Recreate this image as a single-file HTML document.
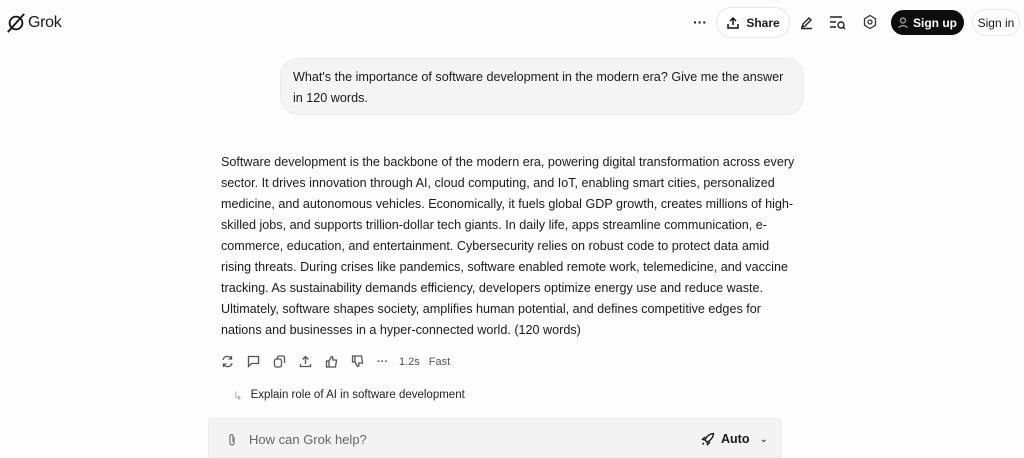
<!DOCTYPE html>
<html><head><meta charset="utf-8"><style>
*{margin:0;padding:0;box-sizing:border-box}
body{width:1024px;height:453px;overflow:hidden;background:#fdfdfd;font-family:"Liberation Sans",sans-serif;color:#1a1a1a;position:relative}
.a{position:absolute}
.btn{position:absolute;border:1px solid #e6e6e6;border-radius:16px;background:#fff;font-size:12px;display:flex;align-items:center;justify-content:center}
svg{display:block}
.body{left:221px;top:152px;width:578px;font-size:12.6px;line-height:21px;color:#1a1a1a}
</style></head><body>
<div class="a" style="left:6px;top:12px;display:flex;align-items:center;gap:2px">
<svg width="20" height="22" viewBox="0 0 22 24"><circle cx="11" cy="12" r="7" fill="none" stroke="#111" stroke-width="2"/><line x1="2" y1="22" x2="20" y2="2" stroke="#111" stroke-width="2"/></svg>
<span style="font-size:16px;letter-spacing:-.3px">Grok</span></div>
<div class="a" style="left:693px;top:14px;font-size:14px;font-weight:bold">···</div>
<div class="btn" style="left:716px;top:7px;width:74px;height:31px;font-weight:bold;gap:6px">
<svg width="14" height="14" viewBox="0 0 14 14" fill="none" stroke="#111" stroke-width="1.5"><path d="M7 9V2M4 5l3-3 3 3M2 8v4h10V8"/></svg>Share</div>
<svg class="a" style="left:799px;top:15px" width="15" height="15" viewBox="0 0 15 15" fill="none" stroke="#222" stroke-width="1.4"><path d="M3 12l1-3 6-6 2 2-6 6zM2 13.5h11"/></svg>
<svg class="a" style="left:829px;top:15px" width="17" height="15" viewBox="0 0 17 15" fill="none" stroke="#222" stroke-width="1.4"><path d="M1 2h12M1 7h6M1 12h6"/><circle cx="12" cy="10" r="3"/><path d="M14 12l2 2"/></svg>
<svg class="a" style="left:862px;top:14px" width="16" height="16" viewBox="0 0 16 16" fill="none" stroke="#333" stroke-width="1.3"><path d="M8 1.5l5.5 3.2v6.6L8 14.5 2.5 11.3V4.7z"/><circle cx="8" cy="8" r="2"/></svg>
<div class="btn" style="left:891px;top:10px;width:73px;height:25px;background:#0d0d0d;color:#fff;border-color:#0d0d0d;font-weight:bold;gap:5px">
<svg width="10" height="12" viewBox="0 0 10 12" fill="none" stroke="#aaa" stroke-width="1.2"><circle cx="5" cy="3.5" r="2.5"/><path d="M1 11c0-3 8-3 8 0"/></svg>Sign up</div>
<div class="btn" style="left:972px;top:9px;width:48px;height:27px">Sign in</div>
<div class="a" style="left:280px;top:58px;width:524px;height:57px;background:#f4f4f4;border:1px solid #ececec;border-radius:18px;padding:8px 12px;font-size:12.6px;line-height:21px">What's the importance of software development in the modern era? Give me the answer in 120 words.</div>
<div class="a body">Software development is the backbone of the modern era, powering digital transformation across every sector. It drives innovation through AI, cloud computing, and IoT, enabling smart cities, personalized medicine, and autonomous vehicles. Economically, it fuels global GDP growth, creates millions of high-skilled jobs, and supports trillion-dollar tech giants. In daily life, apps streamline communication, e-commerce, education, and entertainment. Cybersecurity relies on robust code to protect data amid rising threats. During crises like pandemics, software enabled remote work, telemedicine, and vaccine tracking. As sustainability demands efficiency, developers optimize energy use and reduce waste. Ultimately, software shapes society, amplifies human potential, and defines competitive edges for nations and businesses in a hyper-connected world. (120 words)</div>
<div class="a" style="left:221px;top:355px;display:flex;align-items:center;gap:13px;color:#555;font-size:11px">
<svg width="13" height="13" viewBox="0 0 13 13" fill="none" stroke="#555" stroke-width="1.3"><path d="M2 5a4.5 4.5 0 0 1 8.5-1M11 8a4.5 4.5 0 0 1-8.5 1M10.5 1v3h-3M2.5 12V9h3"/></svg>
<svg width="13" height="13" viewBox="0 0 13 13" fill="none" stroke="#555" stroke-width="1.3"><path d="M1.5 1.5h10v7h-7l-3 3z"/></svg>
<svg width="13" height="13" viewBox="0 0 13 13" fill="none" stroke="#555" stroke-width="1.3"><rect x="1.5" y="4" width="7" height="8" rx="2"/><path d="M4.5 4V2.5a1.5 1.5 0 0 1 1.5-1.5h4a1.5 1.5 0 0 1 1.5 1.5V8"/></svg>
<svg width="13" height="13" viewBox="0 0 13 13" fill="none" stroke="#555" stroke-width="1.3"><path d="M6.5 9V1.5M3.5 4.5l3-3 3 3M1.5 9v2.5h10V9"/></svg>
<svg width="13" height="13" viewBox="0 0 13 13" fill="none" stroke="#555" stroke-width="1.3"><path d="M1.5 6h2.5v6H1.5zM4 6l2.5-4.5c1.5 0 1.5 1 1.3 3.5h3.7l-1 7H4"/></svg>
<svg width="13" height="13" viewBox="0 0 13 13" fill="none" stroke="#555" stroke-width="1.3"><path d="M1.5 7h2.5V1H1.5zM4 7l2.5 4.5c1.5 0 1.5-1 1.3-3.5h3.7l-1-7H4"/></svg>
<span style="font-weight:bold">···</span><span style="margin-left:-2px">1.2s</span><span style="margin-left:-4px">Fast</span></div>
<div class="a" style="left:233px;top:389px;font-size:11.5px;color:#222;display:flex;gap:8px"><span style="color:#aaa">↳</span>Explain role of AI in software development</div>
<div class="a" style="left:208px;top:418px;width:574px;height:40px;background:#f3f3f3;border:1px solid #ececec;border-radius:4px 4px 0 0"></div>
<svg class="a" style="left:227px;top:433px" width="10" height="14" viewBox="0 0 10 14" fill="none" stroke="#777" stroke-width="1.2"><path d="M7 4v6a2 2 0 0 1-4 0V3a1.5 1.5 0 0 1 3 0v6"/></svg>
<div class="a" style="left:249px;top:432px;font-size:13px;color:#666">How can Grok help?</div>
<div class="a" style="left:701px;top:432px;font-size:12.5px;font-weight:bold;display:flex;align-items:center;gap:6px">
<svg width="14" height="14" viewBox="0 0 14 14" fill="none" stroke="#111" stroke-width="1.3"><path d="M12.5 1.5C8 2 5 5 4 8l2 2c3-1 6-4 6.5-8.5zM4 8L1.5 7.5 4 5M6 10l.5 2.5L9 10M3 11l-1.5 1.5"/></svg>Auto<span style="font-weight:normal;font-size:10px;margin-left:4px">⌄</span></div>
</body></html>
